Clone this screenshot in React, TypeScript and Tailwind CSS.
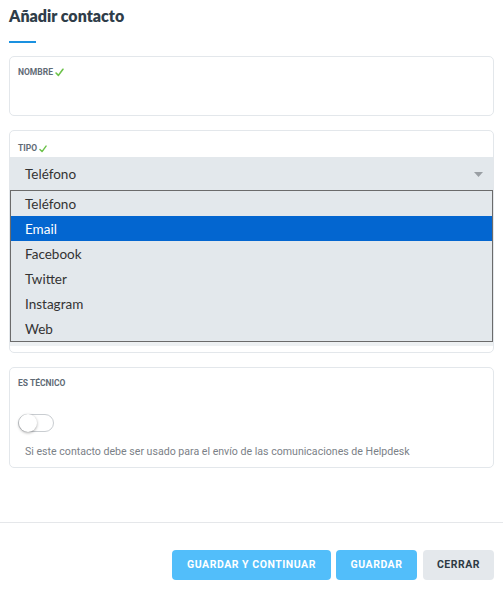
import React from "react";

const Check = ({ size = 10 }: { size?: number }) => (
  <svg width={size} height={size} viewBox="0 0 10 10" className="inline-block">
    <path d="M1.2 5.6 L3.8 8.2 L8.8 1.4" fill="none" stroke="#6cc24a" strokeWidth="1.8" strokeLinecap="round" strokeLinejoin="round" />
  </svg>
);

const label = "text-[8.5px] font-bold uppercase text-[#5f6b76] [font-family:Roboto,sans-serif]";

export default function App() {
  const options = ["Teléfono", "Email", "Facebook", "Twitter", "Instagram", "Web"];
  return (
    <div className="w-[503px] h-[592px] bg-white flex flex-col [font-family:Roboto,sans-serif]">
      <div className="px-[9px] pt-[5px]">
        <h1 className="text-[16px] leading-[22px] font-extrabold text-[#2f3d49] [font-family:Lato,sans-serif]">Añadir contacto</h1>
        <div className="mt-[14px] w-[27px] h-[2px] bg-[#1a91e0]" />
      </div>

      <div className="px-[9px] mt-[13px] flex flex-col gap-[14px]">
        <div className="h-[60px] border border-[#e3e7eb] rounded-[5px] px-[8px] pt-[9px]">
          <div className={`${label} flex items-center gap-[2px]`}>NOMBRE <Check size={9} /></div>
        </div>

        <div className="relative h-[223px] border border-[#e3e7eb] rounded-[5px] flex flex-col">
          <div className={`${label} flex items-center gap-[2px] px-[8px] pt-[9px] h-[26px]`}>TIPO <Check size={8} /></div>
          <div className="h-[33px] bg-[#e3e8ec] flex items-center justify-between pl-[15px] pr-[10px] pt-[1px] text-[13.5px] text-[#333] [font-family:Lato,sans-serif]">
            <span>Teléfono</span>
            <svg width="9" height="5" viewBox="0 0 9 5"><path d="M0 0 H9 L4.5 5 Z" fill="#9a9fa4" /></svg>
          </div>
          <div className="flex-1 flex flex-col justify-end">
            <div className="h-[14px] bg-[#eef1f3]" />
            <div className="h-[6px]" />
          </div>
          <div className="absolute left-0 right-0 top-[59px] border border-[#6b6b6b] bg-[#e3e8ec] flex flex-col text-[13.5px] [font-family:Lato,sans-serif]">
            {options.map((o) => (
              <div
                key={o}
                className={`h-[25px] flex items-center pl-[14px] pt-[1px] ${o === "Email" ? "bg-[#0366d0] text-white" : "text-[#333]"}`}
              >
                {o}
              </div>
            ))}
          </div>
        </div>

        <div className="h-[101px] border border-[#e3e7eb] rounded-[5px] px-[8px] pt-[9px] flex flex-col">
          <div className={label}>ES TÉCNICO</div>
          <div className="mt-[24px] w-[36px] h-[18px] rounded-full border border-[#c9cdd1] bg-white relative">
            <div className="absolute left-0 top-[-1px] w-[18px] h-[18px] rounded-full bg-white shadow-[0_1px_3px_rgba(0,0,0,0.35)]" />
          </div>
          <div className="mt-[12px] pl-[7px] text-[10.6px] text-[#7b8187]">
            Si este contacto debe ser usado para el envío de las comunicaciones de Helpdesk
          </div>
        </div>
      </div>

      <div className="mt-auto border-t border-[#e5e7ea] h-[70px] flex items-start justify-end pr-[9px] pt-[27px]">
        <button className="h-[30px] w-[159px] rounded-[4px] bg-[#52befa] text-white text-[10.5px] font-bold tracking-[0.05em]">GUARDAR Y CONTINUAR</button>
        <button className="ml-[5px] h-[30px] w-[81px] rounded-[4px] bg-[#52befa] text-white text-[10.5px] font-bold tracking-[0.05em]">GUARDAR</button>
        <button className="ml-[6px] h-[30px] w-[71px] rounded-[4px] bg-[#e4e8ec] text-[#2e3a44] text-[10.5px] font-bold tracking-[0.05em]">CERRAR</button>
      </div>
    </div>
  );
}
